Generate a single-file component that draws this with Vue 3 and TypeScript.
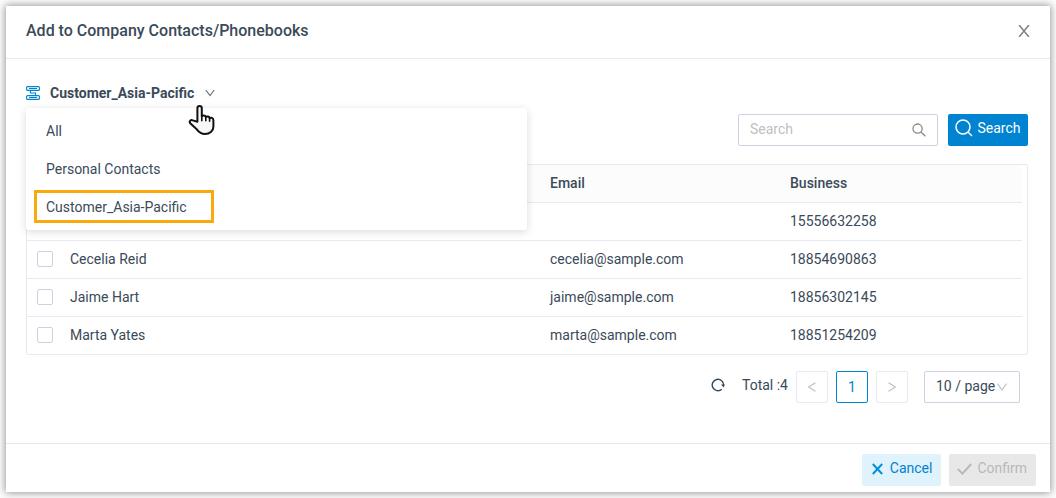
<script setup lang="ts">
import { ref } from 'vue'

interface Contact {
  name: string
  email: string
  business: string
}

const groups: string[] = ['All', 'Personal Contacts', 'Customer_Asia-Pacific']
const current = ref<string>('Customer_Asia-Pacific')
const open = ref<boolean>(true)
const keyword = ref<string>('')
const pageSize = ref<number>(10)

const contacts: Contact[] = [
  { name: '', email: '', business: '15556632258' },
  { name: 'Cecelia Reid', email: 'cecelia@sample.com', business: '18854690863' },
  { name: 'Jaime Hart', email: 'jaime@sample.com', business: '18856302145' },
  { name: 'Marta Yates', email: 'marta@sample.com', business: '18851254209' },
]

function choose(group: string): void {
  current.value = group
  open.value = false
}
</script>

<template>
  <section class="dialog" role="dialog" aria-labelledby="dialog-title">
    <header class="head">
      <h1 id="dialog-title">Add to Company Contacts/Phonebooks</h1>
      <button class="close" type="button" aria-label="Close">
        <svg width="12" height="12" viewBox="0 0 12 12" fill="none" stroke="#808080" stroke-width="1.5">
          <path d="M1 0 11 12M11 0 1 12" />
        </svg>
      </button>
    </header>

    <main class="body">
      <div class="picker">
        <button class="picker-btn" type="button" :aria-expanded="open" @click="open = !open">
          <svg width="14" height="14" viewBox="0 0 14 14" fill="none" stroke="#0083d0" stroke-width="1.1">
            <rect x=".6" y=".6" width="12.8" height="3.8" rx="1" />
            <rect x=".6" y="9.6" width="12.8" height="3.8" rx="1" />
            <path d="M3 2.5h8M3 11.5h8M4.500 4.500V7h5v2.500" />
          </svg>
          <span>{{ current }}</span>
          <svg class="chev" width="12" height="8" viewBox="0 0 12 8" fill="none" stroke="#5d6b78" stroke-width="1.1">
            <path d="M1.800 1 6 6.600 10.200 1" />
          </svg>
        </button>
        <ul v-if="open" class="menu">
          <li v-for="g in groups" :key="g">
            <button type="button" @click="choose(g)">
              <span :class="{ marked: g === current }">{{ g }}</span>
            </button>
          </li>
        </ul>
        <svg class="hand" width="28" height="32" viewBox="0 0 28 32" fill="#f7f7f7" stroke="#111" stroke-width="2" stroke-linejoin="round" stroke-linecap="round">
          <path d="M9.400 17.800V4.200c0-3 4.400-3 4.400 0v8.200c.6-1.400 3.800-1.200 4 .8.800-1.200 3.600-.8 3.800 1 1-1 3.800-.4 3.800 2v6.600c0 4.400-3.800 7.200-8.400 7.200-3.600 0-6-1.600-8-4.400L2.200 19.200c-1.400-2 .6-3.800 2.600-2.800z" />
          <path d="M13.800 12.400v4.400M17.800 13.200v3.600M21.600 14.200v3" fill="none" stroke-width="1.600" />
        </svg>
      </div>

      <form class="tools" @submit.prevent>
        <div class="field">
          <input v-model="keyword" type="text" placeholder="Search" aria-label="Search" />
          <svg width="14" height="14" viewBox="0 0 14 14" fill="none" stroke="#8a8a8a" stroke-width="1.3">
            <circle cx="5.600" cy="5.600" r="4.600" />
            <path d="m9 9 4.300 4.300" />
          </svg>
        </div>
        <button class="search" type="submit">
          <svg width="18" height="18" viewBox="0 0 18 18" fill="none" stroke="#fff" stroke-width="1.500">
            <circle cx="8" cy="8" r="7" />
            <path d="m13 13 4 4" />
          </svg>
          <span>Search</span>
        </button>
      </form>

      <div class="grid">
        <table>
          <colgroup>
            <col class="c-check" />
            <col />
            <col class="c-mail" />
            <col class="c-phone" />
          </colgroup>
          <thead>
            <tr>
              <th></th>
              <th></th>
              <th scope="col">Email</th>
              <th scope="col">Business</th>
            </tr>
          </thead>
          <tbody>
            <tr v-for="c in contacts" :key="c.business">
              <td class="check"><input type="checkbox" :aria-label="c.name || c.business" /></td>
              <td>{{ c.name }}</td>
              <td>{{ c.email }}</td>
              <td>{{ c.business }}</td>
            </tr>
          </tbody>
        </table>
      </div>

      <nav class="pager" aria-label="Pagination">
        <button class="refresh" type="button" aria-label="Refresh">
          <svg width="14" height="14" viewBox="0 0 14 14" fill="none" stroke="#33475b" stroke-width="1.400">
            <path d="M10.800 11.200A5.700 5.700 0 1 1 12.600 7.400" />
            <path d="M10 6.600h3.800L12.600 9.400z" fill="#33475b" stroke="none" />
          </svg>
        </button>
        <span class="total">Total :4</span>
        <button class="page" type="button" disabled aria-label="Previous page">
          <svg width="10" height="10" viewBox="0 0 10 10" fill="none" stroke="#bfbfbf" stroke-width="1.100">
            <path d="M8.500 .8 1.500 5l7 4.200" />
          </svg>
        </button>
        <button class="page active" type="button" aria-current="page">1</button>
        <button class="page" type="button" disabled aria-label="Next page">
          <svg width="10" height="10" viewBox="0 0 10 10" fill="none" stroke="#bfbfbf" stroke-width="1.100">
            <path d="M1.500 .8 8.500 5l-7 4.200" />
          </svg>
        </button>
        <div class="size">
          <select v-model="pageSize" aria-label="Rows per page">
            <option :value="10">10 / page</option>
            <option :value="20">20 / page</option>
          </select>
          <svg width="10" height="8" viewBox="0 0 10 8" fill="none" stroke="#bfbfbf" stroke-width="1.100">
            <path d="M.6 .6 5 7 9.400 .6" />
          </svg>
        </div>
      </nav>
    </main>

    <footer class="foot">
      <button class="act cancel" type="button">
        <svg width="11" height="12" viewBox="0 0 11 12" fill="none" stroke="#0090d8" stroke-width="1.900">
          <path d="m.8 1 9.400 10M10.200 1 .8 11" />
        </svg>
        <span>Cancel</span>
      </button>
      <button class="act confirm" type="button" disabled>
        <svg width="15" height="12" viewBox="0 0 15 12" fill="none" stroke="#b8b8b8" stroke-width="1.900">
          <path d="m.8 6 4.600 4.600L14.200 1" />
        </svg>
        <span>Confirm</span>
      </button>
    </footer>
  </section>
</template>

<style>
body {
  background: #fff;
}
</style>

<style scoped>
.dialog,
.dialog * {
  box-sizing: border-box;
}
.dialog {
  display: flex;
  flex-direction: column;
  min-height: calc(100vh - 12px);
  margin: 6px;
  background: #fff;
  box-shadow: 0 0 8px 1px rgba(0, 0, 0, 0.42);
  color: #3a4a59;
  font: 14px/20px Roboto, "Liberation Sans", sans-serif;
}
button,
input,
select {
  margin: 0;
  padding: 0;
  border: 0;
  background: none;
  color: inherit;
  font: inherit;
}
svg {
  display: block;
  flex: none;
}
.head {
  display: flex;
  align-items: center;
  justify-content: space-between;
  height: 53px;
  padding: 0 20px 2px;
  border-bottom: 1px solid #e8eaf2;
}
h1 {
  margin: 0;
  font-size: 16px;
  font-weight: 500;
  line-height: 24px;
}
.body {
  flex: 1;
  padding: 23px 22px 40px 20px;
}
.picker {
  position: relative;
}
.picker-btn {
  display: flex;
  align-items: center;
  height: 22px;
  gap: 10px;
  font-weight: 700;
}
.menu {
  position: absolute;
  z-index: 1;
  top: 26px;
  left: 0;
  width: 50%;
  margin: 0;
  padding: 4px 0;
  border-radius: 2px;
  background: #fff;
  box-shadow: 0 2px 8px rgba(0, 0, 0, 0.15);
  list-style: none;
}
.menu button {
  display: flex;
  align-items: center;
  width: 100%;
  height: 38px;
  padding: 0 8px 1px;
}
.menu span {
  padding: 4px 24px 3px 9px;
  border: 3px solid transparent;
}
.menu .marked {
  border-color: #f9a90c;
}
.hand {
  position: absolute;
  z-index: 2;
  top: 22px;
  left: 162px;
}
.tools {
  display: flex;
  justify-content: flex-end;
  gap: 10px;
  margin-top: 10px;
}
.field {
  display: flex;
  align-items: center;
  width: 200px;
  height: 32px;
  padding: 0 11px;
  border: 1px solid #cfd0e0;
  border-radius: 2px;
}
.field input {
  flex: 1;
  min-width: 0;
  padding-bottom: 2px;
  outline: 0;
}
.field input::placeholder {
  color: #bfbfbf;
  opacity: 1;
}
.search {
  display: flex;
  align-items: center;
  justify-content: center;
  gap: 4px;
  width: 80px;
  height: 32px;
  padding-bottom: 4px;
  border-radius: 2px;
  background: #0083d0;
  color: #fff;
}
.grid {
  margin-top: 18px;
  padding-right: 5px;
  border: 1px solid #e8eaf2;
  border-radius: 2px;
}
table {
  width: 100%;
  table-layout: fixed;
  border-collapse: separate;
  border-spacing: 0;
}
.c-check {
  width: 33px;
}
.c-mail {
  width: 240px;
}
.c-phone {
  width: 242px;
}
th,
td {
  height: 38px;
  padding: 0 10px 2px;
  border-bottom: 1px solid #e8eaf2;
  text-align: left;
}
th {
  background: #fcfcfc;
  font-weight: 500;
}
tbody tr:last-child td {
  height: 37px;
  border-bottom: 0;
}
.check input {
  display: block;
  width: 16px;
  height: 16px;
  border: 1px solid #cfd0e0;
  border-radius: 2px;
  background: #fff;
  appearance: none;
}
.pager {
  display: flex;
  align-items: center;
  justify-content: flex-end;
  gap: 8px;
  margin-top: 16px;
  padding-right: 8px;
}
.refresh {
  margin-right: 9px;
  padding-bottom: 4px;
}
.total {
  padding-bottom: 4px;
}
.page {
  display: grid;
  place-items: center;
  width: 32px;
  height: 32px;
  border: 1px solid #e8eaf2;
  border-radius: 2px;
}
.page.active {
  border-color: #0083d0;
  color: #0083d0;
}
.size {
  display: grid;
  align-items: center;
  width: 96px;
  margin-left: 8px;
}
.size select,
.size svg {
  grid-area: 1 / 1;
}
.size select {
  width: 100%;
  height: 32px;
  padding: 0 0 2px 11px;
  border: 1px solid #cfd0e0;
  border-radius: 2px;
  appearance: none;
}
.size svg {
  justify-self: end;
  margin-right: 13px;
  pointer-events: none;
}
.foot {
  display: flex;
  justify-content: flex-end;
  gap: 8px;
  padding: 10px 14px 6px;
  border-top: 1px solid #e8e8e8;
}
.act {
  display: flex;
  align-items: center;
  height: 32px;
  padding-bottom: 4px;
  border-radius: 2px;
}
.act svg {
  margin-top: 2px;
}
.cancel {
  gap: 7px;
  padding-left: 10px;
  padding-right: 9px;
  background: #e0f2fb;
  color: #0083d0;
}
.confirm {
  gap: 5px;
  padding-left: 8px;
  padding-right: 9px;
  background: #e8e8e8;
  color: #b8b8b8;
}
</style>
